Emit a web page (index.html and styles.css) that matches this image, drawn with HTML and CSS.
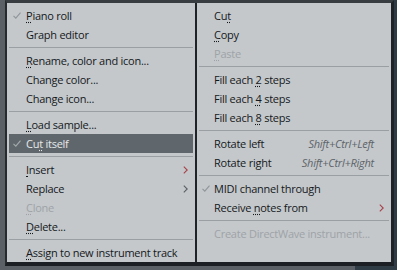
FILE: index.html
```html
<!DOCTYPE html>
<html lang="en">
<head>
<meta charset="utf-8">
<title>Channel menu</title>
<link rel="stylesheet" href="styles.css">
</head>
<body>
<div class="menus">
  <ul class="menu left">
    <li class="item"><svg class="check" viewBox="0 0 8 7"><polyline points="0.5,3.8 2.8,6.2 7.5,0.6"/></svg><span class="label"><u class="k">P</u>iano roll</span></li>
    <li class="item"><span class="label">Graph editor</span></li>
    <li class="sep"></li>
    <li class="item"><span class="label"><u class="k">R</u>ename, color and icon...</span></li>
    <li class="item"><span class="label">Change color...</span></li>
    <li class="item"><span class="label">Change icon...</span></li>
    <li class="sep"></li>
    <li class="item"><span class="label"><u class="k">L</u>oad sample...</span></li>
    <li class="item sel"><svg class="check" viewBox="0 0 8 7"><polyline points="0.5,3.8 2.8,6.2 7.5,0.6"/></svg><span class="label">Cu<u class="k">t</u> itself</span></li>
    <li class="sep"></li>
    <li class="item"><span class="label"><u class="k">I</u>nsert</span><svg class="arrow red" viewBox="0 0 5 8"><polyline points="0.8,0.6 4.2,4 0.8,7.4"/></svg></li>
    <li class="item"><span class="label">Replace</span><svg class="arrow" viewBox="0 0 5 8"><polyline points="0.8,0.6 4.2,4 0.8,7.4"/></svg></li>
    <li class="item dis"><span class="label"><u class="k">C</u>lone</span></li>
    <li class="item"><span class="label"><u class="k">D</u>elete...</span></li>
    <li class="sep"></li>
    <li class="item"><span class="label"><u class="k">A</u>ssign to new instrument track</span></li>
  </ul>
  <ul class="menu right">
    <li class="item"><span class="label">Cu<u class="k">t</u></span></li>
    <li class="item"><span class="label"><u class="k">C</u>opy</span></li>
    <li class="item dis"><span class="label"><u class="k">P</u>aste</span></li>
    <li class="sep"></li>
    <li class="item"><span class="label">Fill each <u class="k">2</u> steps</span></li>
    <li class="item"><span class="label">Fill each <u class="k">4</u> steps</span></li>
    <li class="item"><span class="label">Fill each <u class="k">8</u> steps</span></li>
    <li class="sep"></li>
    <li class="item"><span class="label">Rotate left</span><span class="key">Shift+Ctrl+Left</span></li>
    <li class="item"><span class="label">Rotate right</span><span class="key">Shift+Ctrl+Right</span></li>
    <li class="sep"></li>
    <li class="item"><svg class="check" viewBox="0 0 8 7"><polyline points="0.5,3.8 2.8,6.2 7.5,0.6"/></svg><span class="label">MIDI channel through</span></li>
    <li class="item"><span class="label">Receive <u class="k">n</u>otes from</span><svg class="arrow red" viewBox="0 0 5 8"><polyline points="0.8,0.6 4.2,4 0.8,7.4"/></svg></li>
    <li class="sep"></li>
    <li class="item dis"><span class="label">Create DirectWave instrument...</span></li>
  </ul>
</div>
</body>
</html>
```
FILE: styles.css
```css
* { box-sizing: border-box; }

html, body {
  margin: 0;
  height: 270px;
  overflow: hidden;
}

body {
  background: linear-gradient(to right, #5b6066 0, #5b6066 355px, #2f3c45 355px);
  font-family: "Open Sans", "Noto Sans", sans-serif;
  font-size: 11px;
  letter-spacing: -0.25px;
}

.menus {
  display: flex;
  width: 389px;
  height: 266px;
  margin-left: 5px;
  background: #c4c8cb;
  border-top: 3px solid #383d42;
  border-left: 2px solid #262b2f;
  border-right: 3px solid #1f2428;
  border-bottom: 4px solid #1c2024;
}

.menu {
  list-style: none;
  margin: 0;
  padding: 3px 0 0;
}

.left {
  width: 190px;
  border-right: 2px solid #1f2428;
}

.right {
  flex: 1;
}

.item {
  position: relative;
  display: flex;
  height: 19px;
  line-height: 19px;
  margin: 0 2px;
  padding-left: 17px;
  color: #15181b;
  white-space: nowrap;
}

.right .item {
  padding-left: 15px;
  padding-right: 15px;
}

.label { white-space: pre; }

.item.dis { color: #9ea3a7; }

.item.sel {
  background: #60676c;
  color: #e6e9eb;
}

.sep {
  height: 1px;
  margin: 3px 2px;
  background: #9a9fa3;
}

.k {
  text-decoration: underline dotted;
  text-underline-offset: 2px;
}

.check {
  position: absolute;
  left: 4px;
  top: 6px;
  width: 8px;
  height: 7px;
  fill: none;
  stroke: #8f969b;
  stroke-width: 1.1;
}

.right .check { left: 3px; }

.sel .check { stroke: #a3aaae; }

.arrow {
  position: absolute;
  right: 5px;
  top: 6px;
  width: 5px;
  height: 8px;
  fill: none;
  stroke: #5a5f64;
  stroke-width: 1.1;
}

.arrow.red { stroke: #a8404a; }

.key {
  margin-left: auto;
  font-style: italic;
  color: #5e646a;
}
```
